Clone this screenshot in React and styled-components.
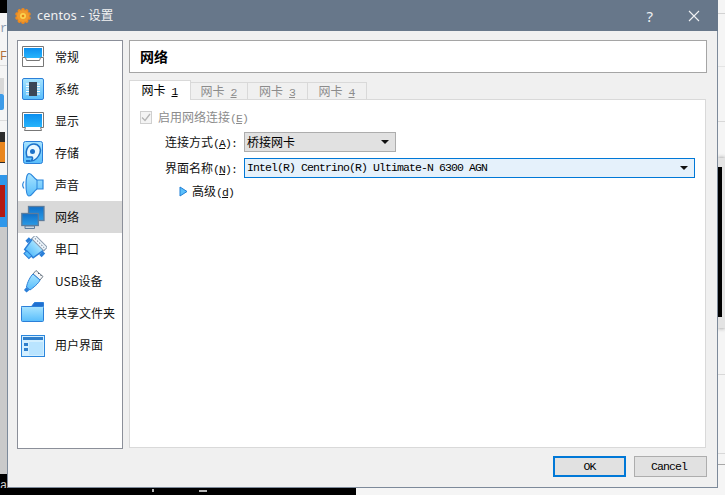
import React from "react";
import styled, { createGlobalStyle } from "styled-components";

const Global = createGlobalStyle`
  html, body { margin: 0; padding: 0; background: #f5f5f5; }
  body { width: 725px; height: 495px; overflow: hidden; font-family: "Noto Sans CJK SC", "Noto Sans", sans-serif; }
  #root { width: 725px; height: 495px; }
  * { box-sizing: border-box; }
`;

const Desktop = styled.div`
  position: relative;
  width: 725px;
  height: 495px;
  overflow: hidden;
  background: #f5f5f5;
`;

const Piece = styled.div`
  position: absolute;
  left: ${p => p.$x}px;
  top: ${p => p.$y}px;
  width: ${p => p.$w}px;
  height: ${p => p.$h}px;
  background: ${p => p.$bg};
  border-radius: ${p => p.$r || 0}px;
  box-shadow: ${p => p.$shadow || "none"};
`;

const Scrap = styled.span`
  position: absolute;
  left: ${p => p.$x}px;
  top: ${p => p.$y}px;
  font: 12px/14px "Liberation Mono", monospace;
  color: ${p => p.$c};
`;

const Dialog = styled.div`
  position: absolute;
  left: 7px;
  top: 0;
  width: 711px;
  height: 488px;
  display: flex;
  flex-direction: column;
  background: #f0f0f0;
  border: 1px solid #7d8a9a;
  border-top: 0;
`;

const TitleBar = styled.div`
  height: 31px;
  flex: none;
  display: flex;
  align-items: center;
  padding: 0 18px 0 8px;
  background: #67778a;
  color: #f2f2f2;
  margin: 0 -1px 0 -1px;
`;

const TitleText = styled.span`
  margin: -2px 0 0 6px;
  font-size: 12.5px;
  letter-spacing: 0.2px;
  font-family: "Noto Sans", "Noto Sans CJK SC", sans-serif;
`;

const TitleActions = styled.div`
  margin-left: auto;
  display: flex;
  align-items: center;
  gap: 35px;
`;

const Help = styled.span`
  font: 15px/16px "Noto Sans", sans-serif;
  color: #eef0f2;
`;

const Body = styled.div`
  flex: 1;
  min-height: 0;
  display: flex;
  gap: 6px;
  padding: 9px 10px 0 9px;
`;

const Sidebar = styled.div`
  width: 106px;
  flex: none;
  display: flex;
  flex-direction: column;
  background: #fff;
  border: 1px solid #8b8f99;
`;

const NavItem = styled.div`
  height: 32px;
  flex: none;
  display: flex;
  align-items: center;
  gap: 8px;
  padding-left: 3px;
  font-size: 12px;
  color: #111;
  background: ${p => (p.$active ? "#d9d9d9" : "transparent")};
`;

const Txt = styled.span`
  margin-top: -2px;
  white-space: nowrap;
`;

const MonoValue = styled(Txt)`
  margin-top: -5px;
`;

const Main = styled.div`
  flex: 1;
  min-width: 0;
  display: flex;
  flex-direction: column;
`;

const Header = styled.div`
  height: 33px;
  flex: none;
  display: flex;
  align-items: center;
  padding: 0 0 2px 10px;
  background: #fff;
  border: 1px solid #a5a5a5;
  font-size: 14px;
  font-weight: 700;
  color: #000;
`;

const Tabs = styled.div`
  height: 20px;
  margin-top: 7px;
  flex: none;
  display: flex;
  align-items: flex-end;
  position: relative;
  z-index: 1;
`;

const Tab = styled.div`
  width: ${p => p.$w}px;
  height: ${p => (p.$active ? 20 : 18)}px;
  display: flex;
  align-items: center;
  justify-content: center;
  padding-right: 1px;
  font-size: 12px;
  color: ${p => (p.$active ? "#000" : "#8c8c8c")};
  background: ${p => (p.$active ? "#fff" : "#f0f0f0")};
  border: 1px solid #d9d9d9;
  border-left-width: ${p => (p.$active ? 1 : 0)}px;
  border-bottom-width: ${p => (p.$active ? 0 : 1)}px;
`;

const Pane = styled.div`
  flex: 1;
  min-height: 0;
  margin: -1px 1px 1px 0;
  padding: 10px 10px 0;
  background: #fff;
  border: 1px solid #d9d9d9;
  font-size: 12px;
  color: #111;
`;

const CheckRow = styled.div`
  height: 14px;
  display: flex;
  align-items: center;
  gap: 6px;
  color: #8c8c8c;
`;

const CheckBox = styled.span`
  width: 12px;
  height: 13px;
  flex: none;
  display: flex;
  align-items: center;
  justify-content: center;
  border: 1px solid #cfcfcf;
  background: #f4f4f4;
`;

const Form = styled.div`
  margin-top: 8px;
  padding-left: 25px;
  display: grid;
  grid-template-columns: 79px 1fr;
  grid-auto-rows: 20px;
  row-gap: 6px;
  align-items: center;
`;

const Combo = styled.div`
  width: ${p => p.$w || "100%"};
  height: 20px;
  display: flex;
  align-items: center;
  padding: 0 6px 0 2px;
  background: ${p => (p.$focus ? "#e5f1fb" : "#e1e1e1")};
  border: 1px solid ${p => (p.$focus ? "#0078d7" : "#adadad")};
  color: #000;
`;

const Arrow = styled.span`
  margin-left: auto;
  width: 0;
  height: 0;
  border-left: 4px solid transparent;
  border-right: 4px solid transparent;
  border-top: 4px solid #111;
`;

const Advanced = styled.div`
  margin-top: 5px;
  padding-left: 39px;
  height: 16px;
  display: flex;
  align-items: center;
  gap: 4px;
`;

const Footer = styled.div`
  height: 38px;
  flex: none;
  display: flex;
  justify-content: flex-end;
  gap: 8px;
  padding: 7px 10px 0 0;
`;

const Button = styled.div`
  width: ${p => p.$w}px;
  height: 21px;
  display: flex;
  align-items: center;
  justify-content: center;
  padding-right: ${p => (p.$primary ? 0 : 3)}px;
  background: #e1e1e1;
  border: ${p => (p.$primary ? "2px solid #0078d7" : "1px solid #adadad")};
  color: #000;
`;

const Lat = styled.span`
  font-family: "Liberation Mono", monospace;
  font-size: 11.5px;
  letter-spacing: -0.9px;
`;

const Icon = styled.svg`
  display: block;
  flex: none;
`;

const Defs = () => (
  <svg width="0" height="0" style={{ position: "absolute" }}>
    <defs>
      <linearGradient id="scr" x1="0" y1="0" x2="0" y2="1">
        <stop offset="0" stopColor="#0b8ff0" />
        <stop offset="1" stopColor="#27b4fb" />
      </linearGradient>
      <linearGradient id="net" x1="0" y1="0" x2="0" y2="1">
        <stop offset="0" stopColor="#0f6fc8" />
        <stop offset="1" stopColor="#2a9be6" />
      </linearGradient>
      <linearGradient id="lit" x1="0" y1="0" x2="0" y2="1">
        <stop offset="0" stopColor="#a8e4ff" />
        <stop offset="1" stopColor="#58bdfb" />
      </linearGradient>
    </defs>
  </svg>
);

const Svg = ({ children }) => (
  <Icon width="26" height="26" viewBox="0 0 26 26">{children}</Icon>
);

const GeneralIcon = () => (
  <Svg>
    <path d="M1.500 12.500V2.500h21v10" fill="#fff" stroke="#777" />
    <rect x="3" y="4" width="18" height="10" fill="url(#scr)" />
    <path d="M1.500 13.500h3l1 3h13l1-3h3v9h-21z" fill="#fff" stroke="#777" />
  </Svg>
);
const SystemIcon = () => (
  <Svg>
    <rect x="1.500" y="2.500" width="21" height="21" rx="1.500" fill="url(#lit)" stroke="#2b7fd8" />
    <path d="M5 8h14M5 10.500h14M5 13h14M5 15.500h14M5 18h14" stroke="#fff" />
    <rect x="8" y="6" width="8" height="14" fill="#3b4657" />
  </Svg>
);
const DisplayIcon = () => (
  <Svg>
    <path d="M1.500 4.500h21v15h-3l1 3h-17l1-3h-3z" fill="#fff" stroke="#777" />
    <rect x="3" y="6" width="18" height="13" fill="url(#scr)" />
  </Svg>
);
const StorageIcon = () => (
  <Svg>
    <rect x="2.500" y="1.500" width="19" height="22" rx="2" fill="url(#lit)" stroke="#2b7fd8" />
    <path d="M6 17C3.500 9 8 4 13 4c5 0 7.500 5 6 9-1.500 4-5 8-9 8 2-2 2-3 1-4z" fill="#e9f8ff" stroke="#1d72c9" strokeWidth="1.500" />
    <circle cx="11.500" cy="11.500" r="2.500" fill="#1d72c9" />
    <rect x="5" y="20" width="4" height="2" fill="#1d72c9" />
  </Svg>
);
const SoundIcon = () => (
  <Svg>
    <path d="M8 1.500c3 0 4 4 8 6.500h6v9h-6c-4 2.500-5 7-8 7-2 0-3-5-3-11.500S6 1.500 8 1.500z" fill="url(#lit)" stroke="#2b86dc" strokeWidth="1.200" />
    <path d="M16 8v9" stroke="#2b86dc" />
    <path d="M3 9.500c-1.500 2-1.500 5 0 7" fill="none" stroke="#2b86dc" strokeWidth="1.200" />
  </Svg>
);
const NetworkIcon = () => (
  <Svg>
    <rect x="7.500" y="2.500" width="15.500" height="14" fill="url(#net)" stroke="#5c7c9c" strokeWidth="1.300" />
    <rect x="0.800" y="9.500" width="16.500" height="12" fill="url(#net)" stroke="#5c7c9c" strokeWidth="1.300" />
    <path d="M4 22h9.500v2.500H4z" fill="#c9d6e2" stroke="#5c7c9c" />
  </Svg>
);
const SerialIcon = () => (
  <Svg>
    <g transform="rotate(45 12.500 13)">
      <path d="M4.500 6.500h16l-2 13h-12z" fill="url(#lit)" stroke="#2b7fd8" strokeWidth="1.500" />
      <rect x="4" y="2" width="17" height="5" fill="#eef6fc" stroke="#8d9db0" />
      <path d="M6 4.500h13" stroke="#7d8b9c" strokeDasharray="1.500 1.500" />
      <rect x="9" y="19" width="7" height="4" fill="#58bdfb" stroke="#2b7fd8" />
      <rect x="1" y="8" width="3.500" height="5" fill="#2b7fd8" />
      <rect x="20.500" y="8" width="3.500" height="5" fill="#2b7fd8" />
    </g>
  </Svg>
);
const UsbIcon = () => (
  <Svg>
    <path d="M15 2.500l7 6-3 3.500-7-6z" fill="#f6f6f6" stroke="#6f7c8a" />
    <path d="M17 5l1 1M19.500 7l1 1" stroke="#55616e" />
    <path d="M12 6l7 6c-1 3-7 8-10 10l-3.500-3C6 15 9.500 8 12 6z" fill="url(#lit)" stroke="#2b7fd8" />
    <path d="M5.500 19l3 3-3 2.500-2.500-2.500z" fill="#2b7fd8" />
  </Svg>
);
const FolderIcon = () => (
  <Svg>
    <path d="M0.500 6.500h10l3-4h9v4z" fill="#1f6fd0" stroke="#2b7fd8" />
    <rect x="0.500" y="6.500" width="22" height="15" rx="1" fill="url(#lit)" stroke="#2b7fd8" />
  </Svg>
);
const WindowIcon = () => (
  <Svg>
    <rect x="0.500" y="3.500" width="23" height="21" fill="#d3efff" stroke="#2b86dc" />
    <rect x="2" y="5" width="20" height="3" fill="#2f7fcb" />
    <rect x="8" y="10" width="14" height="13" fill="#b9e4ff" />
    <rect x="3" y="11" width="4" height="3" fill="#2f7fcb" />
    <rect x="3" y="16" width="4" height="3" fill="#2f7fcb" />
  </Svg>
);

const Gear = () => {
  const teeth = Array.from({ length: 10 }, (_, i) => i * 36);
  return (
    <Icon width="16" height="16" viewBox="0 0 16 16">
      {teeth.map(a => (
        <circle key={a} cx="8" cy="1.800" r="1.800" fill="#ef8a1d" transform={`rotate(${a} 8 8)`} />
      ))}
      <circle cx="8" cy="8" r="6" fill="#f09a2c" />
      <circle cx="8" cy="8" r="3" fill="#fbd34f" />
      <circle cx="8" cy="8" r="1.300" fill="#e87f14" />
    </Icon>
  );
};

const nav = [
  ["常规", GeneralIcon],
  ["系统", SystemIcon],
  ["显示", DisplayIcon],
  ["存储", StorageIcon],
  ["声音", SoundIcon],
  ["网络", NetworkIcon],
  ["串口", SerialIcon],
  ["USB设备", UsbIcon],
  ["共享文件夹", FolderIcon],
  ["用户界面", WindowIcon],
];

const tabs = [
  ["1", 62],
  ["2", 57],
  ["3", 60],
  ["4", 59],
];

export default function App() {
  return (
    <Desktop>
      <Global />
      <Defs />

      <Piece $x={0} $y={0} $w={7} $h={13} $bg="#000" />
      <Piece $x={0} $y={65} $w={7} $h={1} $bg="#dcdcdc" />
      <Piece $x={0} $y={120} $w={7} $h={1} $bg="#dcdcdc" />
      <Scrap $x={0} $y={22} $c="#8a9aae">r</Scrap>
      <Scrap $x={0} $y={50} $c="#b0703a">F</Scrap>
      <Piece $x={-6} $y={94} $w={10} $h={16} $r={2} $bg="#3d9be8" />
      <Piece $x={0} $y={78} $w={4} $h={16} $bg="#d8d8d8" />
      <Piece $x={0} $y={132} $w={5} $h={31} $bg="#2c2c2c" />
      <Piece $x={0} $y={142} $w={5} $h={20} $bg="#e9861f" />
      <Piece $x={0} $y={175} $w={7} $h={52} $bg="#2f97ea" />
      <Piece $x={0} $y={185} $w={5} $h={32} $bg="#b31a12" />
      <Piece $x={0} $y={227} $w={7} $h={247} $bg="#cacaca" />
      <Piece $x={0} $y={474} $w={7} $h={21} $bg="#000" />
      <Scrap $x={0} $y={479} $c="#cfcfcf">a</Scrap>
      <Piece $x={0} $y={488} $w={356} $h={7} $bg="#000" />
      <Piece $x={152} $y={489} $w={2} $h={3} $bg="#b5b5b5" />
      <Piece $x={199} $y={490} $w={8} $h={2} $bg="#b5b5b5" />

      <Piece $x={718} $y={13} $w={7} $h={1} $bg="#d2d2d2" />
      <Piece $x={718} $y={66} $w={7} $h={1} $bg="#e4e4e4" />
      <Piece $x={718} $y={121} $w={7} $h={1} $bg="#d8d8d8" />
      <Piece $x={718} $y={158} $w={7} $h={170} $bg="#e3e3e3" $shadow="0 0 4px #888" />
      <Piece $x={718} $y={167} $w={4} $h={150} $bg="#000" />
      <Piece $x={718} $y={374} $w={7} $h={1} $bg="#d8d8d8" />
      <Piece $x={718} $y={453} $w={7} $h={1} $bg="#d8d8d8" />
      <Piece $x={718} $y={464} $w={7} $h={1} $bg="#a8a8a8" />

      <Dialog>
        <TitleBar>
          <Gear />
          <TitleText>centos - 设置</TitleText>
          <TitleActions>
            <Help>?</Help>
            <Icon width="12" height="12" viewBox="0 0 12 12">
              <path d="M1 1l10 10M11 1L1 11" stroke="#f0f2f4" strokeWidth="1.100" fill="none" />
            </Icon>
          </TitleActions>
        </TitleBar>
        <Body>
          <Sidebar>
            {nav.map(([label, Ico]) => (
              <NavItem key={label} $active={label === "网络"}>
                <Ico />
                <Txt>{label}</Txt>
              </NavItem>
            ))}
          </Sidebar>
          <Main>
            <Header>网络</Header>
            <Tabs>
              {tabs.map(([n, w], i) => (
                <Tab key={n} $w={w} $active={i === 0}>
                  <Txt>网卡<Lat>&nbsp;<u>{n}</u></Lat></Txt>
                </Tab>
              ))}
            </Tabs>
            <Pane>
              <CheckRow>
                <CheckBox>
                  <Icon width="10" height="9" viewBox="0 0 10 9">
                    <path d="M1 4.500l3 3 5-6.500" stroke="#b5b5b5" strokeWidth="1.300" fill="none" />
                  </Icon>
                </CheckBox>
                <Txt>启用网络连接<Lat>(<u>E</u>)</Lat></Txt>
              </CheckRow>
              <Form>
                <Txt>连接方式<Lat>(<u>A</u>):</Lat></Txt>
                <Combo $w="152px">
                  <Txt>桥接网卡</Txt>
                  <Arrow />
                </Combo>
                <Txt>界面名称<Lat>(<u>N</u>):</Lat></Txt>
                <Combo $focus>
                  <MonoValue><Lat>Intel(R) Centrino(R) Ultimate-N 6300 AGN</Lat></MonoValue>
                  <Arrow />
                </Combo>
              </Form>
              <Advanced>
                <Icon width="9" height="11" viewBox="0 0 9 11">
                  <path d="M1 1l7 4.500L1 10z" fill="#5cc0fb" stroke="#1f7fd6" />
                </Icon>
                <Txt>高级<Lat>(<u>d</u>)</Lat></Txt>
              </Advanced>
            </Pane>
          </Main>
        </Body>
        <Footer>
          <Button $w={73} $primary><Lat>OK</Lat></Button>
          <Button $w={73}><Lat>Cancel</Lat></Button>
        </Footer>
      </Dialog>
    </Desktop>
  );
}
